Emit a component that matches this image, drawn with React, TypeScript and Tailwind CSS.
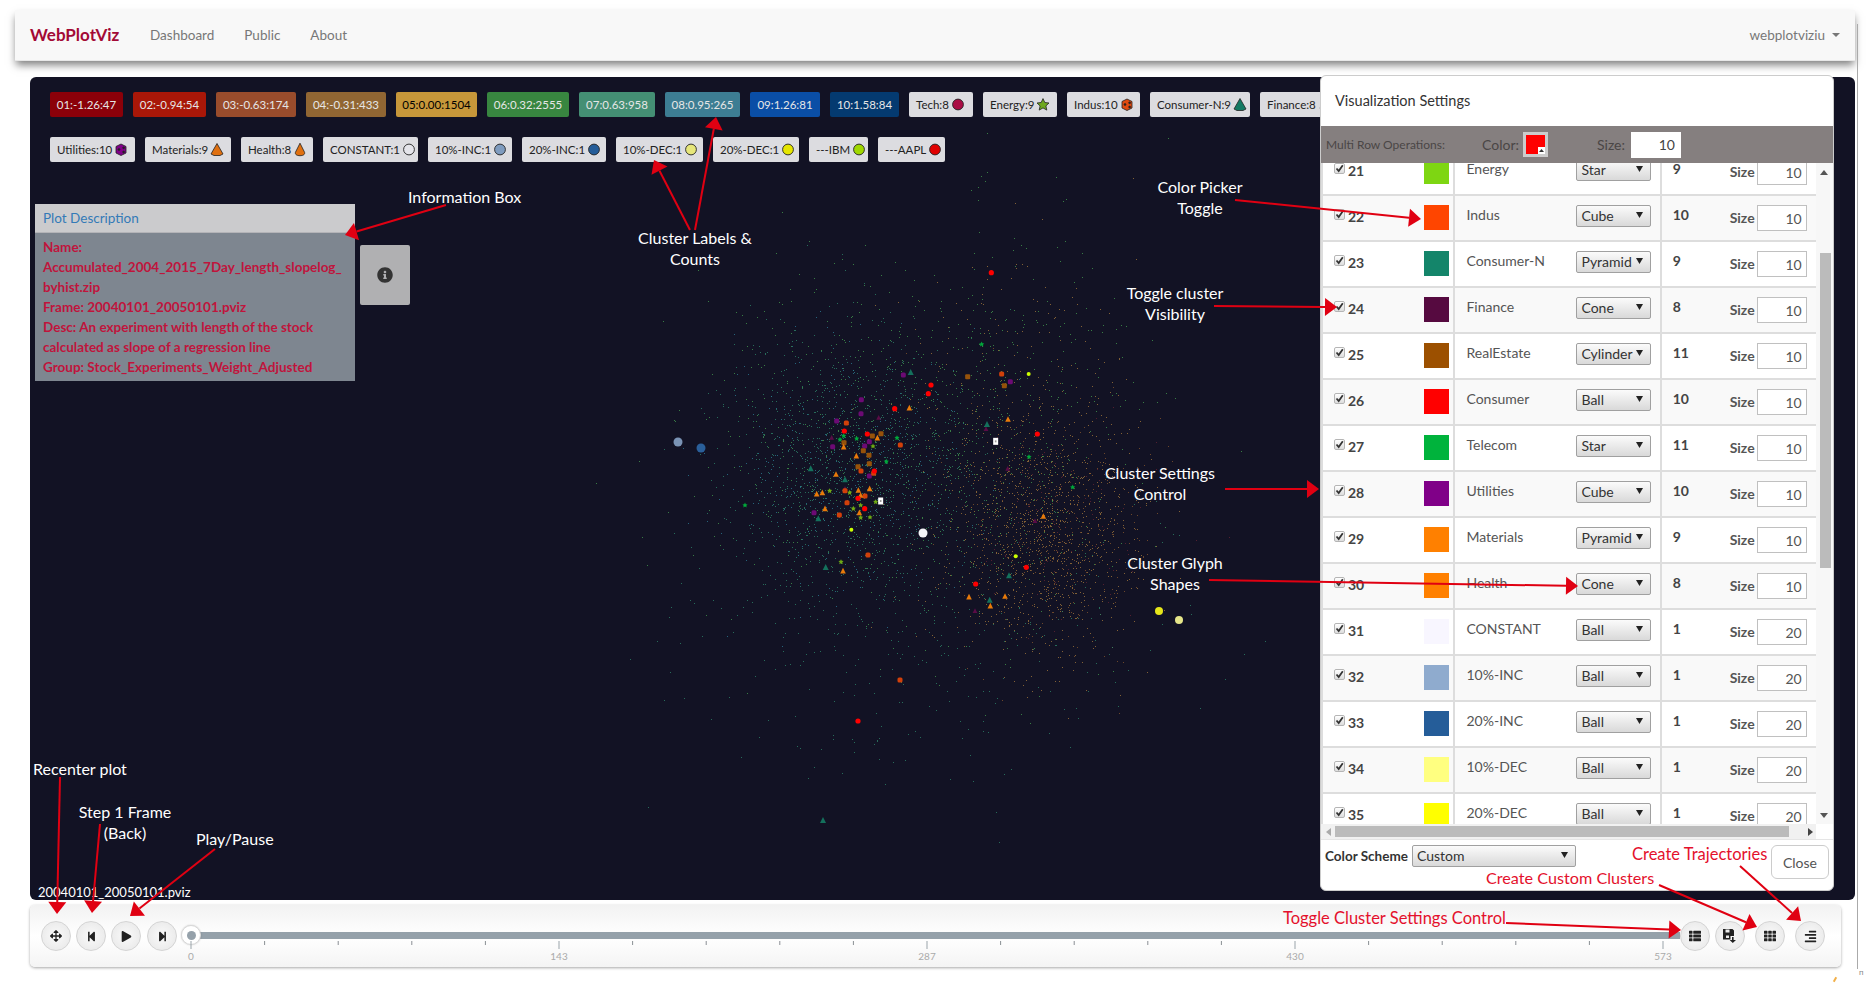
import type { ReactNode } from "react"
import { FaArrowsAlt, FaStepBackward, FaStepForward, FaPlay, FaThList, FaTh, FaAlignRight, FaInfoCircle } from "react-icons/fa"

type Glyph = "ball" | "star" | "cube" | "pyramid" | "cone"

function GlyphIcon({ shape, color }: { shape: Glyph; color: string }) {
  return (
    <svg width="14" height="15" viewBox="0 0 14 15" className="ml-[2px] shrink-0">
      {shape === "ball" && <circle cx="7" cy="7.5" r="5.4" fill={color} stroke="#222" strokeWidth="0.9" />}
      {shape === "star" && <path d="M7 1.6l1.8 3.9 4.2.5-3.1 2.9.9 4.2L7 10.9l-3.8 2.2.9-4.2L1 6l4.2-.5z" fill={color} stroke="#222" strokeWidth="0.8" />}
      {shape === "cube" && (
        <g stroke="#222" strokeWidth="0.8">
          <path d="M2 4.5L7 2l5 2.5v6.5L7 13.5 2 11z" fill={color} />
          <circle cx="5" cy="7.5" r="0.9" fill="#222" />
          <circle cx="9.6" cy="5.8" r="0.9" fill="#222" />
          <circle cx="9.6" cy="10" r="0.9" fill="#222" />
        </g>
      )}
      {shape === "pyramid" && <path d="M7 1.5l6 10.5-3 1.5H4L1 12z" fill={color} stroke="#222" strokeWidth="0.8" />}
      {shape === "cone" && <path d="M7 1.2l4.6 9.2c.6 2.2-1.9 3.3-4.6 3.3s-5.2-1.1-4.6-3.3z" fill={color} stroke="#222" strokeWidth="0.8" />}
    </svg>
  )
}

const rangeLabels = [
  { text: "01:-1.26:47", bg: "bg-[#8b0009]", w: "w-[73px]", dark: false },
  { text: "02:-0.94:54", bg: "bg-[#a91708]", w: "w-[73px]", dark: false },
  { text: "03:-0.63:174", bg: "bg-[#994c2c]", w: "w-[80px]", dark: false },
  { text: "04:-0.31:433", bg: "bg-[#916633]", w: "w-[80px]", dark: false },
  { text: "05:0.00:1504", bg: "bg-[#c7973a]", w: "w-[81px]", dark: true },
  { text: "06:0.32:2555", bg: "bg-[#388640]", w: "w-[82px]", dark: false },
  { text: "07:0.63:958", bg: "bg-[#448f74]", w: "w-[76px]", dark: false },
  { text: "08:0.95:265", bg: "bg-[#3d7d93]", w: "w-[75px]", dark: false },
  { text: "09:1.26:81", bg: "bg-[#0a4ea6]", w: "w-[70px]", dark: false },
  { text: "10:1.58:84", bg: "bg-[#043a70]", w: "w-[69px]", dark: false },
]

const glyphLabelsTop: { text: string; shape: Glyph; color: string; w: string }[] = [
  { text: "Tech:8", shape: "ball", color: "#aa0c44", w: "w-[64px]" },
  { text: "Energy:9", shape: "star", color: "#6ea81e", w: "w-[74px]" },
  { text: "Indus:10", shape: "cube", color: "#e04a10", w: "w-[73px]" },
  { text: "Consumer-N:9", shape: "pyramid", color: "#137a63", w: "w-[100px]" },
  { text: "Finance:8", shape: "cone", color: "#560a40", w: "w-[80px]" },
]

const glyphLabelsBottom: { text: string; shape: Glyph; color: string; w: string }[] = [
  { text: "Utilities:10", shape: "cube", color: "#800088", w: "w-[85px]" },
  { text: "Materials:9", shape: "pyramid", color: "#e07010", w: "w-[86px]" },
  { text: "Health:8", shape: "cone", color: "#e07010", w: "w-[72px]" },
  { text: "CONSTANT:1", shape: "ball", color: "#e4e4ea", w: "w-[95px]" },
  { text: "10%-INC:1", shape: "ball", color: "#7f9cbf", w: "w-[84px]" },
  { text: "20%-INC:1", shape: "ball", color: "#255d99", w: "w-[84px]" },
  { text: "10%-DEC:1", shape: "ball", color: "#e6e67a", w: "w-[87px]" },
  { text: "20%-DEC:1", shape: "ball", color: "#e6e600", w: "w-[86px]" },
  { text: "---IBM", shape: "ball", color: "#a0d800", w: "w-[59px]" },
  { text: "---AAPL", shape: "ball", color: "#e00000", w: "w-[67px]" },
]

const clusters = [
  { id: 21, name: "Energy", glyph: "Star", count: 9, color: "bg-[#7ed612]", size: 10 },
  { id: 22, name: "Indus", glyph: "Cube", count: 10, color: "bg-[#ff4500]", size: 10 },
  { id: 23, name: "Consumer-N", glyph: "Pyramid", count: 9, color: "bg-[#14856a]", size: 10 },
  { id: 24, name: "Finance", glyph: "Cone", count: 8, color: "bg-[#560a40]", size: 10 },
  { id: 25, name: "RealEstate", glyph: "Cylinder", count: 11, color: "bg-[#9c5000]", size: 10 },
  { id: 26, name: "Consumer", glyph: "Ball", count: 10, color: "bg-[#ff0000]", size: 10 },
  { id: 27, name: "Telecom", glyph: "Star", count: 11, color: "bg-[#00b33c]", size: 10 },
  { id: 28, name: "Utilities", glyph: "Cube", count: 10, color: "bg-[#800088]", size: 10 },
  { id: 29, name: "Materials", glyph: "Pyramid", count: 9, color: "bg-[#ff8000]", size: 10 },
  { id: 30, name: "Health", glyph: "Cone", count: 8, color: "bg-[#ff8000]", size: 10 },
  { id: 31, name: "CONSTANT", glyph: "Ball", count: 1, color: "bg-[#f8f6ff]", size: 20 },
  { id: 32, name: "10%-INC", glyph: "Ball", count: 1, color: "bg-[#8fabce]", size: 20 },
  { id: 33, name: "20%-INC", glyph: "Ball", count: 1, color: "bg-[#255d99]", size: 20 },
  { id: 34, name: "10%-DEC", glyph: "Ball", count: 1, color: "bg-[#ffff80]", size: 20 },
  { id: 35, name: "20%-DEC", glyph: "Ball", count: 1, color: "bg-[#ffff00]", size: 20 },
]

function SelectBox({ value, className }: { value: string; className: string }) {
  return (
    <div className={`relative ${className}`}>
      <select
        defaultValue={value}
        className="block h-full w-full appearance-none rounded-[2px] border border-[#a0a0a0] bg-linear-to-b from-[#fbfbfb] to-[#d9d9d9] pl-[4px] text-[14px] leading-none text-[#333]"
      >
        <option>{value}</option>
      </select>
      <svg width="7" height="6" viewBox="0 0 7 6" className="pointer-events-none absolute right-[8px] top-[7px]">
        <path d="M0 0h7L3.5 6z" fill="#222" />
      </svg>
    </div>
  )
}

function FakeCheck() {
  return (
    <span className="relative inline-block h-[11px] w-[11px] shrink-0 rounded-[2px] border border-[#b5b5b5] bg-linear-to-b from-[#fff] to-[#ddd]">
      <svg width="11" height="11" viewBox="0 0 11 11" className="absolute -left-px -top-px">
        <path d="M2.5 5.5l2.2 2.6L8.8 2.2" fill="none" stroke="#333" strokeWidth="1.8" />
      </svg>
    </span>
  )
}

function ClusterRow({ row, odd }: { row: (typeof clusters)[number]; odd: boolean }) {
  return (
    <div className={`flex h-[46px] border-b-2 border-[#ddd] ${odd ? "bg-white" : "bg-[#f9f9f9]"}`}>
      <div className="flex w-[133px] items-start border-r-2 border-[#ddd] pl-[11px] pt-[9px]">
        <span className="mt-[4px] flex"><FakeCheck /></span>
        <span className="ml-[3px] mt-[2px] text-[14px] font-bold leading-5 text-[#444]">{row.id}</span>
        <span className={`ml-auto mr-[4px] h-[25px] w-[25px] ${row.color}`} />
      </div>
      <div className="flex w-[207px] items-start border-r-2 border-[#ddd] pl-[11px] pt-[9px]">
        <span className="w-[110px] text-[14px] leading-5 text-[#555]">{row.name}</span>
        <SelectBox value={row.glyph} className="h-[22px] w-[75px]" />
      </div>
      <div className="flex w-[155px] items-start pl-[11px] pt-[9px]">
        <span className="w-[57px] text-[14px] font-bold leading-5 text-[#444]">{row.count}</span>
        <span className="mt-[3px] w-[27px] text-[14px] font-bold leading-5 text-[#555]">Size</span>
        <input
          readOnly
          value={row.size}
          className="h-[26px] w-[50px] border border-[#c0c0c0] bg-white pr-[4px] text-right text-[14px] text-[#555]"
        />
      </div>
    </div>
  )
}

function SettingsModal() {
  return (
    <div className="absolute left-[1290px] top-[-2px] z-10 flex h-[816px] w-[514px] flex-col overflow-hidden rounded-[6px] border border-[#ccc] bg-white">
      <div className="flex h-[50px] items-center pl-[14px] text-[14.5px] text-[#333]">Visualization Settings</div>
      <div className="flex h-[37px] items-center bg-[#857f7f] text-[#4a4646]">
        <span className="ml-[5px] w-[156px] text-[12px]">Multi Row Operations:</span>
        <span className="w-[41px] text-[14px]">Color:</span>
        <span className="relative h-[25px] w-[25px] border-[3px] border-[#ccc] bg-[#ff0000]">
          <span className="absolute bottom-0 right-0 flex h-[7px] w-[7px] items-center justify-center bg-white">
            <svg width="5" height="3" viewBox="0 0 5 3"><path d="M0 3h5L2.5 0z" fill="#333" /></svg>
          </span>
        </span>
        <span className="ml-[49px] w-[34px] text-[14px]">Size:</span>
        <input readOnly value="10" className="h-[26px] w-[50px] border-2 border-white bg-white pr-[4px] text-right text-[14px] text-[#444]" />
      </div>
      <div className="flex h-[676px] flex-col">
        <div className="flex h-[661px]">
          <div className="w-[495px] overflow-hidden border-l-2 border-[#ddd]">
            <div className="-mt-[13px]">
              {clusters.map((row, i) => (
                <ClusterRow key={row.id} row={row} odd={i % 2 === 0} />
              ))}
            </div>
          </div>
          <div className="relative w-[17px] bg-[#f7f7f7]">
            <svg width="8" height="5" viewBox="0 0 8 5" className="absolute left-[4px] top-[7px]"><path d="M0 5h8L4 0z" fill="#555" /></svg>
            <div className="absolute left-[4px] top-[90px] h-[315px] w-[11px] bg-[#bbb]" />
            <svg width="8" height="5" viewBox="0 0 8 5" className="absolute bottom-[6px] left-[4px]"><path d="M0 0h8L4 5z" fill="#555" /></svg>
          </div>
        </div>
        <div className="relative h-[15px] w-[495px] bg-[#f1f1f1]">
          <svg width="5" height="8" viewBox="0 0 5 8" className="absolute left-[5px] top-[4px]"><path d="M5 0v8L0 4z" fill="#aaa" /></svg>
          <div className="absolute left-[14px] top-[2px] h-[11px] w-[454px] bg-[#bbb]" />
          <svg width="5" height="8" viewBox="0 0 5 8" className="absolute right-[3px] top-[4px]"><path d="M0 0v8l5-4z" fill="#444" /></svg>
        </div>
      </div>
      <div className="flex flex-1 items-start border-t border-[#e5e5e5] pl-[4px] pt-[5px]">
        <span className="w-[87px] pt-[1px] text-[13.5px] font-bold text-[#333]">Color Scheme</span>
        <SelectBox value="Custom" className="h-[22px] w-[164px]" />
        <button className="ml-auto mr-[4px] h-[34px] w-[58px] rounded-[6px] border border-[#ccc] bg-white text-[14px] text-[#555]">Close</button>
      </div>
    </div>
  )
}

function mulberry(seed: number) {
  return () => {
    seed = (seed + 0x6d2b79f5) | 0
    let t = Math.imul(seed ^ (seed >>> 15), 1 | seed)
    t = (t + Math.imul(t ^ (t >>> 7), 61 | t)) ^ t
    return ((t ^ (t >>> 14)) >>> 0) / 4294967296
  }
}

const rand = mulberry(42)
const gauss = () => Math.sqrt(-2 * Math.log(rand() + 1e-9)) * Math.cos(2 * Math.PI * rand())

function cloud(n: number, cx: number, cy: number, sx: number, sy: number) {
  let d = ""
  for (let i = 0; i < n; i++) {
    const x = Math.round(cx + gauss() * sx)
    const y = Math.round(cy + gauss() * sy)
    d += `M${x} ${y}h1v1h-1z`
  }
  return d
}

const dotClouds = [
  { fill: "#2f8a6c", d: cloud(1100, 848, 468, 62, 68) },
  { fill: "#2d7f98", d: cloud(400, 848, 470, 58, 62) },
  { fill: "#45a050", d: cloud(500, 870, 440, 90, 85) },
  { fill: "#a87c3c", d: cloud(1100, 1040, 530, 50, 62) },
  { fill: "#8a5a2e", d: cloud(400, 1050, 530, 48, 55) },
  { fill: "#6a2434", d: cloud(120, 1060, 530, 50, 50) },
  { fill: "#45a050", d: cloud(450, 1000, 430, 70, 100) },
  { fill: "#a87c3c", d: cloud(160, 1010, 380, 60, 70) },
  { fill: "#2f8a6c", d: cloud(350, 930, 620, 120, 80) },
]

// glyph positions, read off the reference as page coordinates
const z = (p: number[][]) => p.map(([x, y]) => [650 + x / 3, 240 + y / 3])
const reds = [...z([[1024, 98], [843, 435], [835, 461], [734, 506], [583, 573], [652, 582], [673, 693], [624, 775], [644, 806], [1162, 582], [1129, 982], [977, 1032]]), [858, 721]]
const greenStars = z([[995, 312], [581, 587], [570, 598], [620, 595], [741, 593], [709, 664], [285, 795], [1137, 650], [1268, 741]])
const limeStars = z([[669, 618], [599, 757], [539, 752], [610, 805], [632, 795], [632, 832], [660, 831], [677, 785], [573, 965]])
const limeBalls = z([[1136, 402], [604, 869], [1097, 949]])
const tealPyramids = [...z([[782, 396], [1011, 552], [482, 685], [585, 718], [505, 835], [527, 981], [1077, 1006], [1019, 1079]]), [823, 820]]
const purpleCubes = z([[760, 405], [634, 479], [633, 521], [560, 543], [548, 620], [658, 605], [644, 618], [658, 708], [492, 818], [1081, 425]])
const plumCones = z([[686, 532], [545, 592], [1008, 566], [1073, 685], [1155, 842], [975, 1112], [585, 745]])
const redCubes = [...z([[589, 549], [1055, 402], [751, 615], [633, 693], [671, 700], [585, 752], [645, 768], [591, 788], [568, 825], [654, 945]]), [900, 680]]
const brownCubes = z([[953, 410], [1063, 437], [667, 588], [693, 581], [582, 608], [640, 632], [657, 646], [658, 671], [624, 680]])
const orangeCones = z([[778, 503], [1074, 537], [682, 593], [581, 620], [619, 647], [558, 702], [517, 757], [500, 761], [625, 750], [659, 745], [632, 765], [525, 805], [628, 817], [579, 992], [957, 1070], [1065, 1068], [1021, 1097], [1180, 828]])
const whiteCubes = z([[1037, 604], [692, 783]])

function Tri({ x, y, fill, s = 3 }: { x: number; y: number; fill: string; s?: number }) {
  return <path d={`M${x} ${y - s}L${x + s} ${y + s}H${x - s}z`} fill={fill} />
}

function Scatter() {
  return (
    <svg width="1825" height="823" viewBox="30 77 1825 823" className="absolute inset-0">
      {dotClouds.map((c, i) => (
        <path key={i} d={c.d} fill={c.fill} opacity="0.75" shapeRendering="crispEdges" />
      ))}
      <g className="blur-[0.4px]">
        {greenStars.map(([x, y], i) => <path key={i} d={`M${x} ${y - 2.5}l.8 1.7 1.8.2-1.3 1.3.4 1.9-1.7-1-1.7 1 .4-1.9-1.3-1.3 1.8-.2z`} fill="#00a83a" />)}
        {limeStars.map(([x, y], i) => <path key={i} d={`M${x} ${y - 2.5}l.8 1.7 1.8.2-1.3 1.3.4 1.9-1.7-1-1.7 1 .4-1.9-1.3-1.3 1.8-.2z`} fill="#6eaa14" />)}
        {purpleCubes.map(([x, y], i) => <rect key={i} x={x - 2.5} y={y - 2.5} width="5" height="5" rx="1.5" fill="#6c0a74" />)}
        {plumCones.map(([x, y], i) => <Tri key={i} x={x} y={y} fill="#5a0c46" s={2.4} />)}
        {brownCubes.map(([x, y], i) => <rect key={i} x={x - 2.5} y={y - 2.5} width="5" height="5" rx="1" fill="#96520a" />)}
        {redCubes.map(([x, y], i) => <rect key={i} x={x - 2.5} y={y - 2.5} width="5" height="5" rx="1.5" fill="#d2400a" />)}
        {tealPyramids.map(([x, y], i) => <Tri key={i} x={x} y={y} fill="#14705c" />)}
        {orangeCones.map(([x, y], i) => <Tri key={i} x={x} y={y} fill="#e87a0a" s={2.8} />)}
        {reds.map(([x, y], i) => <circle key={i} cx={x} cy={y} r="2.6" fill="#ff0000" />)}
        {limeBalls.map(([x, y], i) => <circle key={i} cx={x} cy={y} r="2" fill="#ccff00" />)}
      </g>
      {whiteCubes.map(([x, y], i) => (
        <g key={i}>
          <rect x={x - 2.5} y={y - 3.5} width="5" height="7" fill="#fff" />
          <rect x={x - 0.8} y={y - 1} width="1.6" height="2" fill="#999" />
        </g>
      ))}
      <circle cx="923" cy="533" r="4.5" fill="#f4f4f8" />
      <circle cx="678" cy="442" r="4.5" fill="#7a93b5" />
      <circle cx="701" cy="448" r="4.5" fill="#2a5f9a" />
      <circle cx="1159" cy="611" r="4" fill="#e6e61a" />
      <circle cx="1179" cy="620" r="4" fill="#e6e68a" />
    </svg>
  )
}

function RoundButton({ children, className = "" }: { children: ReactNode; className?: string }) {
  return (
    <button className={`flex h-[30px] w-[30px] shrink-0 items-center justify-center rounded-full border border-[#d4d4d4] bg-radial from-[#fafafa] to-[#e6e6e6] text-[#222] ${className}`}>
      {children}
    </button>
  )
}

function SliderScale() {
  const major = [0, 1, 2, 3, 4]
  const labels = ["0", "143", "287", "430", "573"]
  const ticks: number[] = []
  for (let i = 0; i <= 20; i++) ticks.push(i)
  return (
    <svg width="1499" height="34" viewBox="0 0 1499 34" className="absolute left-0 top-[10px]">
      {ticks.map((t) => (
        <rect key={t} x={9.5 + t * 73.6} y={10} width="1" height={t % 5 === 0 ? 8 : 4} fill={t % 5 === 0 ? "#9aa3aa" : "#8a8f94"} />
      ))}
      {major.map((m) => (
        <text key={m} x={10 + m * 368} y="29" textAnchor="middle" fontSize="10" fill="#aaa">{labels[m]}</text>
      ))}
    </svg>
  )
}

function Controls() {
  return (
    <div className="ml-[30px] mt-[5px] flex h-[62px] w-[1811px] items-start rounded-[5px] bg-linear-to-b from-[#f2f2f2] via-white to-[#f4f4f4] pl-[11px] pt-[16px] shadow-[0_1px_3px_rgba(0,0,0,0.35)]">
      <div className="flex gap-[5px]">
        <RoundButton><FaArrowsAlt size={12} /></RoundButton>
        <RoundButton><FaStepBackward size={11} /></RoundButton>
        <RoundButton><FaPlay size={11} /></RoundButton>
        <RoundButton className="ml-px"><FaStepForward size={11} /></RoundButton>
      </div>
      <div className="relative ml-[4px] h-[40px] flex-1">
        <div className="absolute left-[14px] right-0 top-[11px] h-[7px] bg-[#95a1aa]" />
        <div className="absolute left-0 top-[4px] flex h-[20px] w-[20px] items-center justify-center rounded-full border border-[#d8d8d8] bg-white shadow-[0_0_2px_rgba(0,0,0,0.2)]">
          <span className="h-[9px] w-[9px] rounded-full bg-[#95a1aa]" />
        </div>
        <SliderScale />
      </div>
      <div className="mr-[16px] flex">
        <RoundButton><FaThList size={12} /></RoundButton>
        <RoundButton className="ml-[5px]">
          <svg width="14" height="14" viewBox="0 0 14 14">
            <path d="M0 0h9.5L11 1.5V7H7.5v3.5H0z" fill="#222" />
            <rect x="2.5" y="0.5" width="4" height="3" fill="#eee" />
            <rect x="3" y="6.5" width="3" height="2.5" fill="#eee" />
            <path d="M9 8h1.6v3H13l-3.2 3-3.2-3H9z" fill="#222" />
          </svg>
        </RoundButton>
        <RoundButton className="ml-[10px]"><FaTh size={12} /></RoundButton>
        <RoundButton className="ml-[10px]"><FaAlignRight size={13} /></RoundButton>
      </div>
    </div>
  )
}

function Arrow({ x1, y1, x2, y2 }: { x1: number; y1: number; x2: number; y2: number }) {
  const a = Math.atan2(y2 - y1, x2 - x1)
  const len = 12
  const hw = 9
  const bx = x2 - len * Math.cos(a)
  const by = y2 - len * Math.sin(a)
  const nx = -Math.sin(a) * hw
  const ny = Math.cos(a) * hw
  return (
    <g fill="#e00012" stroke="#e00012">
      <line x1={x1} y1={y1} x2={bx} y2={by} strokeWidth="2" />
      <path d={`M${x2} ${y2}L${bx + nx} ${by + ny}L${bx - nx} ${by - ny}z`} stroke="none" />
    </g>
  )
}

const arrows = [
  [446, 205, 345, 235],
  [690, 230, 654, 160],
  [695, 230, 716, 117],
  [1235, 200, 1421, 219],
  [1214, 306, 1337, 307],
  [1225, 489, 1319, 489],
  [1209, 580, 1578, 586],
  [60, 777, 57, 914],
  [100, 824, 92, 913],
  [215, 849, 130, 916],
  [1506, 923, 1681, 930],
  [1659, 885, 1757, 927],
  [1740, 866, 1801, 921],
]

function Annotations() {
  return (
    <div className="pointer-events-none absolute inset-0 z-20 text-[16px] leading-[21px] text-white">
      <svg width="1870" height="985" viewBox="0 0 1870 985" className="absolute inset-0">
        {arrows.map(([x1, y1, x2, y2], i) => (
          <Arrow key={i} x1={x1} y1={y1} x2={x2} y2={y2} />
        ))}
      </svg>
      <div className="absolute left-[408px] top-[186px]">Information Box</div>
      <div className="absolute left-[635px] top-[227px] w-[120px] text-center">Cluster Labels &amp; Counts</div>
      <div className="absolute left-[1150px] top-[176px] w-[100px] text-center">Color Picker Toggle</div>
      <div className="absolute left-[1120px] top-[282px] w-[110px] text-center">Toggle cluster Visibility</div>
      <div className="absolute left-[1100px] top-[462px] w-[120px] text-center">Cluster Settings Control</div>
      <div className="absolute left-[1120px] top-[552px] w-[110px] text-center">Cluster Glyph Shapes</div>
      <div className="absolute left-[33px] top-[758px]">Recenter plot</div>
      <div className="absolute left-[70px] top-[801px] w-[110px] text-center">Step 1 Frame (Back)</div>
      <div className="absolute left-[196px] top-[828px]">Play/Pause</div>
      <div className="absolute left-[1632px] top-[844px] text-[16.5px] text-[#e4102c]">Create Trajectories</div>
      <div className="absolute left-[1486px] top-[867px] text-[16.2px] text-[#e4102c]">Create Custom Clusters</div>
      <div className="absolute left-[1283px] top-[908px] text-[16.5px] text-[#e4102c]">Toggle Cluster Settings Control</div>
    </div>
  )
}

function Plot() {
  return (
    <div className="relative ml-[30px] mt-[16px] h-[823px] w-[1825px] rounded-[6px] bg-[#121224]">
      <Scatter />
      <div className="relative flex flex-col gap-[20px] pl-[20px] pt-[15px]">
        <div className="flex w-[1290px] gap-[10px] overflow-hidden whitespace-nowrap">
          {rangeLabels.map((l) => (
            <span key={l.text} className={`flex h-[25px] shrink-0 items-center justify-center rounded-[2px] text-[11.5px] ${l.bg} ${l.w} ${l.dark ? "text-black" : "text-[#e6e6e6]"}`}>
              {l.text}
            </span>
          ))}
          {glyphLabelsTop.map((l) => (
            <span key={l.text} className={`flex h-[25px] shrink-0 items-center rounded-[2px] bg-[#dcdce0] pl-[7px] text-[11.5px] text-[#222] ${l.w}`}>
              {l.text}
              <GlyphIcon shape={l.shape} color={l.color} />
            </span>
          ))}
        </div>
        <div className="flex gap-[10px] whitespace-nowrap">
          {glyphLabelsBottom.map((l) => (
            <span key={l.text} className={`flex h-[25px] shrink-0 items-center rounded-[2px] bg-[#dcdce0] pl-[7px] text-[11.5px] text-[#222] ${l.w}`}>
              {l.text}
              <GlyphIcon shape={l.shape} color={l.color} />
            </span>
          ))}
        </div>
      </div>
      <div className="relative ml-[5px] mt-[42px] flex items-start gap-[5px]">
        <div className="w-[320px]">
          <div className="flex h-[29px] items-center border-b border-[#b4b4b8] bg-[#cbcbcd] pl-[8px] pt-[1px] text-[13.5px] text-[#337ab7]">Plot Description</div>
          <div className="h-[148px] bg-[#7e8690] px-[8px] py-[4px] text-[13.5px] font-bold leading-[20px] whitespace-nowrap text-[#c0143c]">
            <div>Name:</div>
            <div>Accumulated_2004_2015_7Day_length_slopelog_</div>
            <div>byhist.zip</div>
            <div>Frame: 20040101_20050101.pviz</div>
            <div>Desc: An experiment with length of the stock</div>
            <div>calculated as slope of a regression line</div>
            <div>Group: Stock_Experiments_Weight_Adjusted</div>
          </div>
        </div>
        <div className="mt-[41px] flex h-[60px] w-[50px] items-center justify-center rounded-[2px] bg-[#b0b0b2] text-[#333]">
          <FaInfoCircle size={16} />
        </div>
      </div>
      <div className="absolute bottom-[-2px] left-[8px] text-[13px] leading-5 text-white">20040101_20050101.pviz</div>
      <SettingsModal />
    </div>
  )
}

export default function App() {
  return (
    <div className="relative h-[985px] w-[1870px] overflow-hidden bg-white pt-[10px] font-['Lato','Noto_Sans',sans-serif]">
      <nav className="ml-[15px] flex h-[51px] w-[1840px] items-center border-b border-[#e7e7e7] bg-[#f8f8f8] pl-[15px] pr-[15px] shadow-[0_5px_8px_-1px_rgba(0,0,0,0.5)]">
        <span className="mr-[15px] w-[90px] text-[17px] font-bold whitespace-nowrap text-[#a30a35]">WebPlotViz</span>
        <a className="px-[15px] text-[13.5px] text-[#777]">Dashboard</a>
        <a className="px-[15px] text-[13.5px] text-[#777]">Public</a>
        <a className="px-[15px] text-[13.5px] text-[#777]">About</a>
        <span className="ml-auto flex items-center text-[13.5px] text-[#777]">
          webplotviziu
          <svg width="8" height="4" viewBox="0 0 8 4" className="ml-[7px]"><path d="M0 0h8L4 4z" fill="#777" /></svg>
        </span>
      </nav>
      <Plot />
      <Controls />
      <div className="absolute left-[1857px] top-[24px] h-[945px] w-px bg-[#aaa]" />
      <span className="absolute left-[1859px] top-[966px] text-[8px] text-[#888]">п</span>
      <span className="absolute left-[1834px] top-[977px] h-[5px] w-[2px] rotate-[30deg] bg-[#f2b04a]" />
      <Annotations />
    </div>
  )
}
